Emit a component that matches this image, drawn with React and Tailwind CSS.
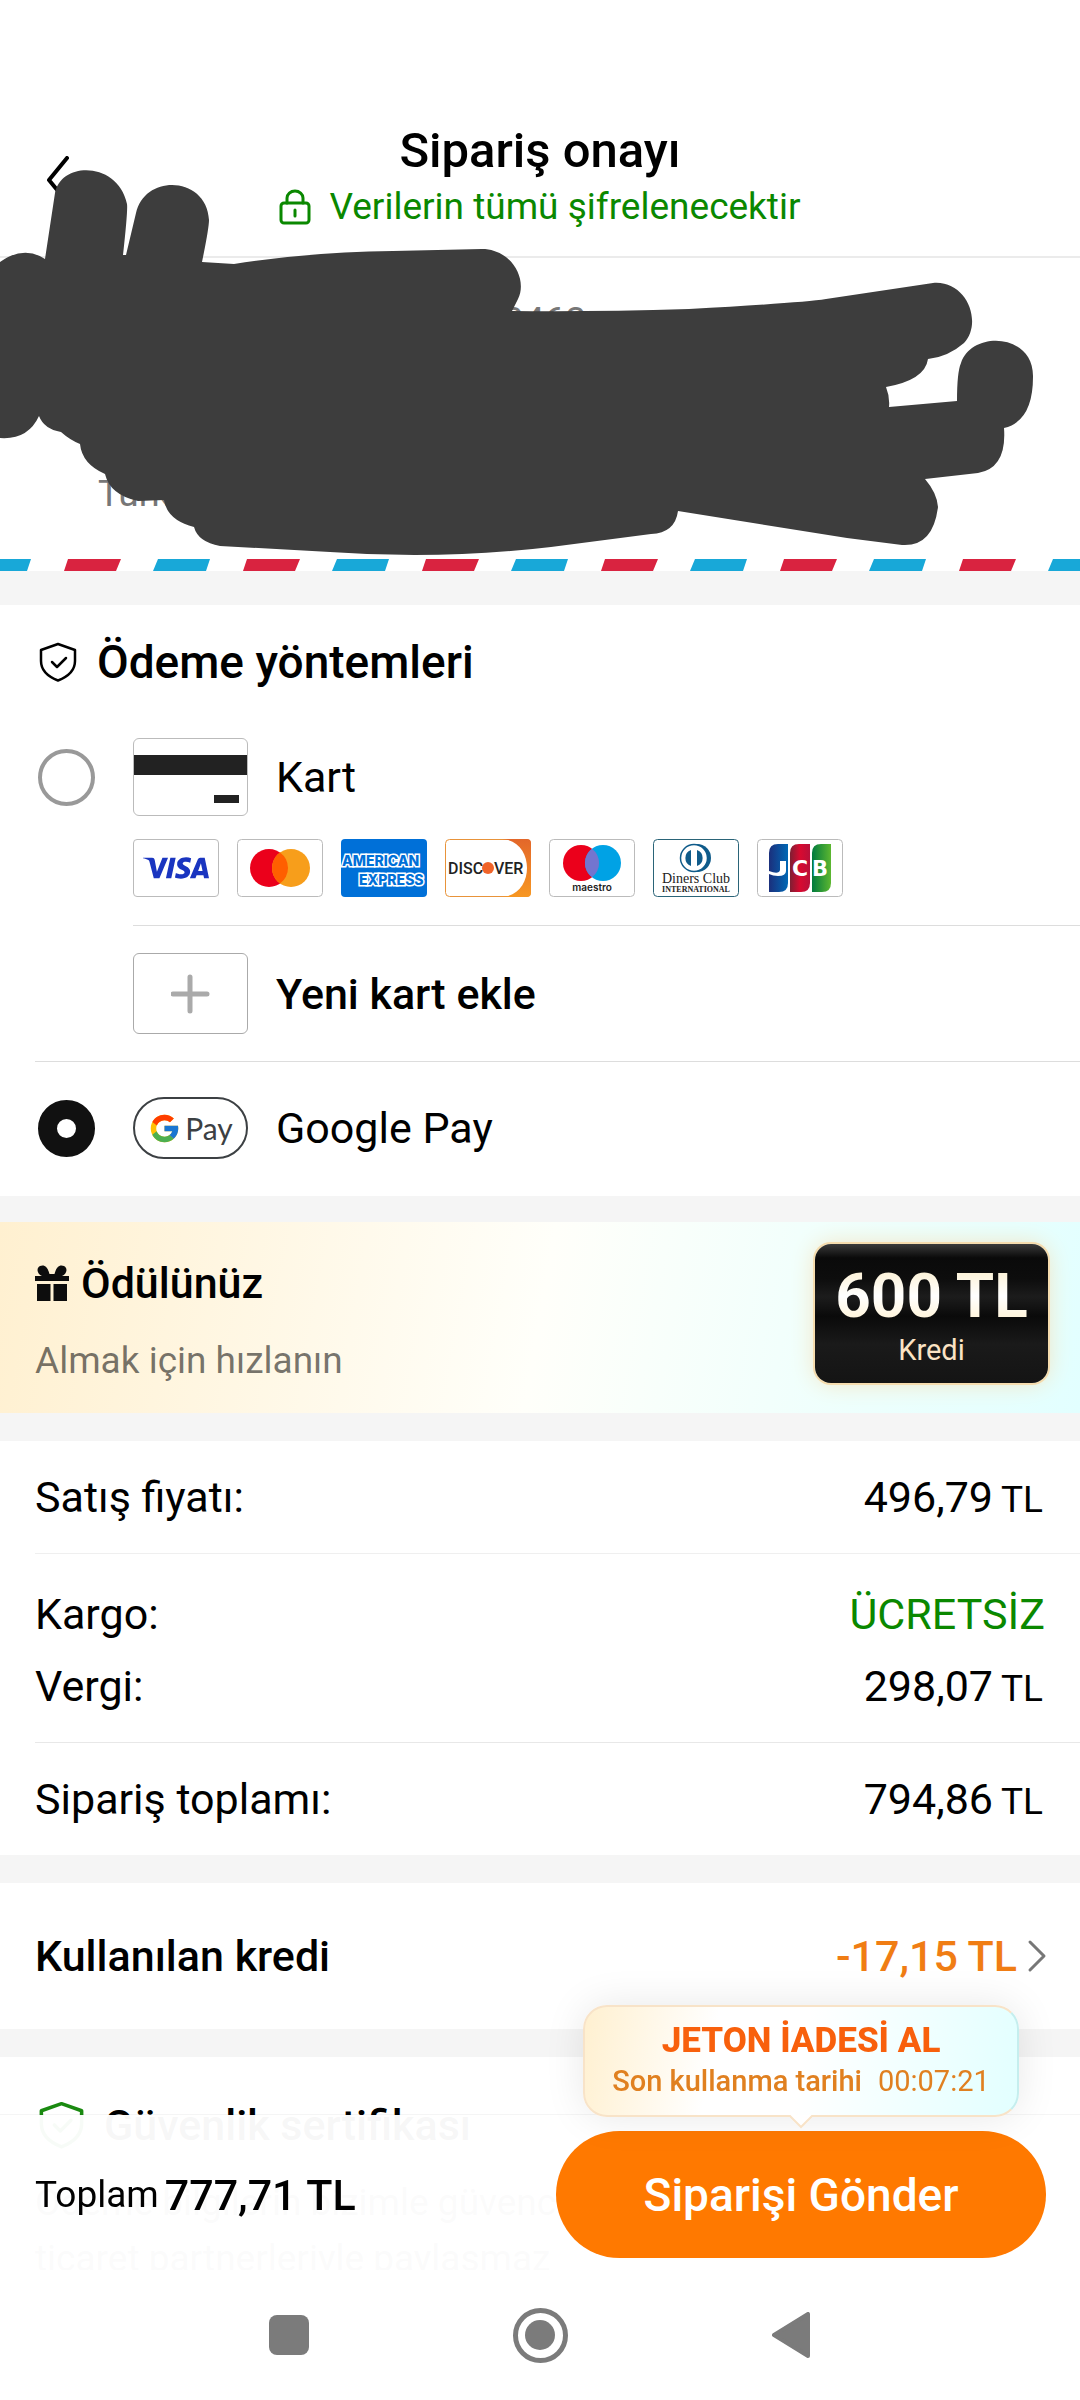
import React, { useState } from 'react';
import { FcGoogle } from 'react-icons/fc';
import { SiVisa } from 'react-icons/si';

const BackIcon = () => (
  <svg className="h-12 w-6" viewBox="0 0 24 48" fill="none" stroke="black" strokeWidth="4" strokeLinecap="round" strokeLinejoin="round">
    <path d="M21 2 L3 24 L21 46" />
  </svg>
);

const LockIcon = () => (
  <svg className="h-9 w-8" viewBox="0 0 32 36" fill="none" stroke="#0a8800" strokeWidth="3" strokeLinecap="round">
    <rect x="2" y="14" width="28" height="20" rx="3" />
    <path d="M8 14 V9 A8 7 0 0 1 24 9 V14" />
    <path d="M16 21 V27" />
  </svg>
);

const ShieldIcon = ({ className }) => (
  <svg className={className} viewBox="0 0 38 40" fill="none" stroke="currentColor" strokeLinecap="round" strokeLinejoin="round">
    <path d="M19 2 L36 8 V19 C36 29 28 35 19 38.500 C10 35 2 29 2 19 V8 Z" />
    <path d="M13 20 L18 25 L27 16" />
  </svg>
);

const GiftIcon = () => (
  <svg className="h-9 w-[34px]" viewBox="0 0 34 36" fill="#0d0d0d">
    <path d="M0 11 H7 C2 9 1 3 5 1 C10 -1 13 3 14.500 9 H19.500 C21 3 24 -1 29 1 C33 3 32 9 27 11 H34 V16 H0 Z" />
    <path d="M2 19 H15.500 V36 H2 Z M18.500 19 H32 V36 H18.500 Z" />
  </svg>
);

// Accepted card brands, each drawn on an 86x58 tile
const Visa = () => (
  <span className="flex h-[58px] w-[86px] items-center justify-center rounded border border-[#bbb] text-[#1a35c0]">
    <SiVisa size={66} title="Visa" />
  </span>
);

const Mastercard = () => (
  <svg className="h-[58px] w-[86px]" viewBox="0 0 86 58">
    <rect x="0.5" y="0.5" width="85" height="57" rx="4" fill="white" stroke="#bbb" />
    <circle cx="32" cy="29" r="19" fill="#eb001b" />
    <circle cx="54" cy="29" r="19" fill="#f79e1b" />
    <path d="M43 13.500 A19 19 0 0 1 43 44.500 A19 19 0 0 1 43 13.500" fill="#ff5f00" />
  </svg>
);

const Amex = () => (
  <svg className="h-[58px] w-[86px]" viewBox="0 0 86 58" fontFamily="Inter, Roboto, sans-serif" fontWeight="800" fill="#0070d8" stroke="white" strokeWidth="3" paintOrder="stroke">
    <rect width="86" height="58" rx="4" stroke="none" />
    <text x="1" y="27" fontSize="14">AMERICAN</text>
    <text x="18" y="46" fontSize="14">EXPRESS</text>
  </svg>
);

const Discover = () => (
  <svg className="h-[58px] w-[86px]" viewBox="0 0 86 58">
    <defs>
      <linearGradient id="discover-orange" x2="0" y2="1">
        <stop stopColor="#e3672a" />
        <stop offset="1" stopColor="#f79722" />
      </linearGradient>
    </defs>
    <rect x="0.5" y="0.5" width="85" height="57" rx="4" fill="white" stroke="#e8933a" />
    <path d="M57 0 H82 Q86 0 86 4 V54 Q86 58 82 58 H57 C74 57 82 43 82 29 C82 15 74 1 57 0 Z" fill="url(#discover-orange)" />
    <text x="3" y="35" fontSize="16" fontWeight="500" fontFamily="Roboto, sans-serif" fill="#222">DISC</text>
    <circle cx="43" cy="29" r="6" fill="#f0642a" />
    <text x="49" y="35" fontSize="16" fontWeight="500" fontFamily="Roboto, sans-serif" fill="#222">VER</text>
  </svg>
);

const Maestro = () => (
  <svg className="h-[58px] w-[86px]" viewBox="0 0 86 58">
    <rect x="0.5" y="0.5" width="85" height="57" rx="4" fill="white" stroke="#bbb" />
    <circle cx="32" cy="24" r="18" fill="#eb001b" />
    <circle cx="54" cy="24" r="18" fill="#00a2e5" />
    <path d="M43 9.700 A18 18 0 0 1 43 38.300 A18 18 0 0 1 43 9.700" fill="#7375cf" />
    <text x="43" y="52" fontSize="10" fontWeight="600" fontFamily="Inter, sans-serif" textAnchor="middle" fill="#222">maestro</text>
  </svg>
);

const Diners = () => (
  <svg className="h-[58px] w-[86px]" viewBox="0 0 86 58">
    <rect x="0.5" y="0.5" width="85" height="57" rx="4" fill="white" stroke="#2a6478" />
    <path d="M41 5 H44 A14 14 0 0 1 44 33 H41 Z" fill="#0f5b8a" />
    <circle cx="41" cy="19" r="13.500" fill="white" stroke="#0f5b8a" strokeWidth="1.500" />
    <path d="M38 11 A8.500 8.500 0 0 0 38 27 Z M44 11 A8.500 8.500 0 0 1 44 27 Z" fill="#0f5b8a" />
    <text x="43" y="44" fontSize="14" fontFamily="Liberation Serif, serif" textAnchor="middle" fill="#222">Diners Club</text>
    <text x="43" y="53" fontSize="8" fontWeight="700" fontFamily="Liberation Serif, serif" textAnchor="middle" fill="#222">INTERNATIONAL</text>
  </svg>
);

const Jcb = () => (
  <svg className="h-[58px] w-[86px]" viewBox="0 0 86 58">
    <defs>
      <linearGradient id="jcb-blue">
        <stop stopColor="#1b2f7c" />
        <stop offset="1" stopColor="#0068b5" />
      </linearGradient>
      <linearGradient id="jcb-red">
        <stop stopColor="#7d1f33" />
        <stop offset="0.5" stopColor="#d80a30" />
        <stop offset="1" stopColor="#b8103a" />
      </linearGradient>
      <linearGradient id="jcb-green">
        <stop stopColor="#007b3e" />
        <stop offset="1" stopColor="#5db730" />
      </linearGradient>
    </defs>
    <rect x="0.5" y="0.5" width="85" height="57" rx="4" fill="white" stroke="#bbb" />
    <path d="M12 14 Q12 5 21 5 H31 V44 Q31 53 22 53 H12 Z" fill="url(#jcb-blue)" />
    <path d="M33 14 Q33 5 42 5 H53 V44 Q53 53 44 53 H33 Z" fill="url(#jcb-red)" />
    <path d="M55 14 Q55 5 64 5 H74 V44 Q74 53 65 53 H55 Z" fill="url(#jcb-green)" />
    <g fill="white">
      <path d="M23 22 H29 V32 Q29 37 21 37 Q16 37 12 35 V32 Q22 36 23 31 Z" />
      <text x="43" y="37" fontSize="22" fontWeight="700" fontFamily="DejaVu Sans, sans-serif" textAnchor="middle">C</text>
      <text x="63" y="37" fontSize="21" fontWeight="700" fontFamily="DejaVu Sans, sans-serif" textAnchor="middle">B</text>
    </g>
  </svg>
);

const Scribble = () => (
  <svg className="pointer-events-none absolute top-0 left-0 w-full" viewBox="0 0 1080 600" fill="#3d3d3d" aria-hidden="true">
    <path d="M0 262 Q24 245 45 259 L55 193 C61 161 118 161 127 204 Q128 210 123 255 L126 255 L136 213 C145 173 207 176 209 220 Q209 228 202 262 L234 264 Q310 252 393 251 L482 249 C511 249 528 279 518 299 L512 311 Q592 312 689 309 Q800 303 826 299 L933 283 C967 280 983 323 964 343 Q948 357 928 359 Q925 380 886 387 Q890 397 889 407 L957 401 Q957 372 961 363 C972 330 1034 333 1033 377 Q1033 421 1004 428 Q1007 468 978 473 L925 479 Q937 493 938 507 Q933 547 902 545 L847 538 L678 511 Q675 533 651 534 L551 547 Q441 560 330 552 L220 546 Q198 542 194 527 Q167 520 164 500 L138 501 Q110 495 105 474 Q82 464 80 444 Q70 440 61 432 Q44 429 39 416 Q28 440 0 438 Z" />
  </svg>
);

const AirmailStripe = () => (
  <svg className="block h-3 w-full" aria-hidden="true">
    <defs>
      <pattern id="airmail" width="179" height="12" patternUnits="userSpaceOnUse" x="-26">
        <path d="M5 0 H57 L53 12 H0 Z" fill="#18a8d8" />
        <path d="M94 0 H147 L142 12 H90 Z" fill="#d92340" />
      </pattern>
    </defs>
    <rect width="100%" height="12" fill="url(#airmail)" />
  </svg>
);

const radioClass =
  'mx-[3px] h-[57px] w-[57px] shrink-0 appearance-none rounded-full border-4 border-[#999] bg-white checked:border-[19px] checked:border-[#111]';

const PriceRow = ({ label, amount }) => (
  <div className="flex items-baseline justify-between">
    <dt>{label}</dt>
    <dd className="flex items-baseline gap-2 pr-[2px]">
      {amount} <span className="text-[37px] leading-10">TL</span>
    </dd>
  </div>
);

const App = () => {
  const [method, setMethod] = useState('gpay');

  return (
    <div className="relative min-h-screen bg-[#f5f5f5] font-[Roboto,sans-serif] text-[43px] leading-14 text-black">
      <header className="relative border-b-2 border-[#ebebeb] bg-white pt-[123px] pb-[21px] text-center">
        <button type="button" aria-label="Geri" className="absolute top-[156px] left-[46px]">
          <BackIcon />
        </button>
        <h1 className="text-[49px] leading-14 font-medium">Sipariş onayı</h1>
        <p className="flex items-center justify-center gap-[18px] text-[37px] leading-14 text-[#0a8800]">
          <LockIcon />
          Verilerin tümü şifrelenecektir
        </p>
      </header>

      <section className="bg-white">
        <address className="flex h-[301px] flex-col justify-between pt-[35px] pb-[37px] pl-[98px] text-[37px] leading-14 text-[#777] not-italic">
          <span className="pl-[405px]">3463</span>
          <span>Türkiye</span>
        </address>
        <AirmailStripe />
      </section>
      <Scribble />

      <section className="mt-[34px] bg-white pt-[29px] pl-[35px]">
        <h2 className="flex items-center text-[46px] font-medium">
          <ShieldIcon className="mr-5 ml-1 h-10 w-[38px] stroke-[2.5]" />
          Ödeme yöntemleri
        </h2>
        <label className="mt-12 flex items-center">
          <input type="radio" name="method" className={radioClass} checked={method === 'card'} onChange={() => setMethod('card')} />
          <span className="mr-7 ml-[35px] flex h-[78px] w-[115px] flex-col rounded-md border border-[#bbb]">
            <span className="mt-4 h-5 bg-[#222]" />
            <span className="mt-5 mr-2 h-2 w-[25px] self-end bg-[#222]" />
          </span>
          Kart
        </label>
        <div className="ml-[98px]">
          <div className="flex gap-[18px] border-b border-[#ddd] pt-[23px] pb-7">
            <Visa />
            <Mastercard />
            <Amex />
            <Discover />
            <Maestro />
            <Diners />
            <Jcb />
          </div>
          <button type="button" className="flex items-center gap-7 py-[27px] font-medium">
            <span className="flex h-[81px] w-[115px] items-center justify-center rounded-md border border-[#aaa]">
              <svg className="h-10 w-10" viewBox="0 0 40 40" stroke="#aaa" strokeWidth="5" strokeLinecap="round">
                <path d="M19 3 V37 M2 20 H36" />
              </svg>
            </span>
            Yeni kart ekle
          </button>
        </div>
        <label className="flex items-center border-t border-[#ddd] pt-[35px] pb-[37px]">
          <input type="radio" name="method" className={radioClass} checked={method === 'gpay'} onChange={() => setMethod('gpay')} />
          <span className="mr-7 ml-[35px] flex h-[62px] w-[115px] items-center justify-center gap-1 rounded-full border-2 border-[#3c4043] font-[Lato,sans-serif] text-[30px] text-[#3c4043]">
            <FcGoogle size={33} />
            Pay
          </span>
          Google Pay
        </label>
      </section>

      <section className="mt-[26px] flex items-start justify-between bg-[linear-gradient(100deg,#fff0d0,#fffffa_50%,#f2fffc_72%,#e2ffff)] pt-[22px] pr-8 pb-6 pl-[35px]">
        <div className="pt-[11px]">
          <h2 className="flex items-center gap-3 font-medium">
            <GiftIcon />
            Ödülünüz
          </h2>
          <p className="mt-[22px] text-[37px] leading-14 text-black/55">Almak için hızlanın</p>
        </div>
        <div className="flex h-[139px] w-[233px] flex-col items-center rounded-2xl bg-[linear-gradient(180deg,#3a3a3a,#0a0a0a_10%,#0d0d0d_25%,#1c1c1c_38%,#0a0a0a_52%,#1a1a1a_72%,#141414)] pt-5 shadow-[0_0_0_2px_#f5dcae,0_0_24px_#f3e3c0]">
          <strong className="bg-linear-to-b from-[#fbeecb] via-white via-50% to-[#fff0cc] bg-clip-text text-[62px] leading-16 font-bold text-transparent">600 TL</strong>
          <span className="text-[29px] leading-11 text-[#fbe3c4]">Kredi</span>
        </div>
      </section>

      <dl className="mt-7 bg-white pl-[35px]">
        <div className="border-b border-[#efefef] py-7 pr-[35px]">
          <PriceRow label="Satış fiyatı:" amount="496,79" />
        </div>
        <div className="flex flex-col gap-4 border-b border-[#e8e8e8] pt-8 pr-[35px] pb-7">
          <div className="flex justify-between">
            <dt>Kargo:</dt>
            <dd className="text-[#0a8800]">ÜCRETSİZ</dd>
          </div>
          <PriceRow label="Vergi:" amount="298,07" />
        </div>
        <div className="pt-7 pr-[35px] pb-7">
          <PriceRow label="Sipariş toplamı:" amount="794,86" />
        </div>
      </dl>

      <section className="mt-7 flex items-center justify-between bg-white py-[45px] pr-[33px] pl-[35px] font-medium">
        <h2>Kullanılan kredi</h2>
        <a href="#kredi" className="flex items-center gap-[10px] text-[#f07d14]">
          -17,15 TL
          <svg className="h-9 w-5" viewBox="0 0 20 36" fill="none" stroke="#777" strokeWidth="3" strokeLinecap="round" strokeLinejoin="round">
            <path d="M3 4 L17 18 L3 32" />
          </svg>
        </a>
      </section>

      <section className="mt-7 bg-white px-[35px] pt-10">
        <h2 className="flex items-center font-medium">
          <ShieldIcon className="mr-5 ml-1 h-12 w-[45px] stroke-[3] text-[#1a8a10]" />
          Güvenlik sertifikası
        </h2>
        <p className="mt-[22px] text-[37px] leading-14 text-[#777]">
          Ödeme bilgilerin bizimle güvence
          <br />
          ticaret partnerleriyle paylaşmaz
        </p>
      </section>

      <footer className="fixed inset-x-0 bottom-0">
        <div className="flex items-center justify-between bg-white/97 pt-4 pr-[34px] pb-3 pl-[35px] shadow-[0_-1px_0_#0000000a]">
          <p className="flex items-center gap-[6px]">
            <span className="text-[37px]">Toplam</span>
            <span className="font-medium">777,71 TL</span>
          </p>
          <div className="relative">
            <div className="absolute bottom-full left-1/2 mb-[14px] w-[436px] -translate-x-1/2 rounded-3xl border-2 border-[#f8e3c8] border-r-[#c5eeee] bg-[linear-gradient(100deg,#fff0d0,white_30%,white_50%,#e2ffff)] py-[14px] text-center whitespace-nowrap shadow-[0_0_40px_#00000018]">
              <p className="text-[35px] leading-10 font-extrabold text-[#f8600c]">JETON İADESİ AL</p>
              <p className="text-[29px] leading-10 text-[#e08020]">
                <span className="mr-4 font-medium">Son kullanma tarihi</span>
                <time>00:07:21</time>
              </p>
              <svg className="absolute top-full left-1/2 h-[14px] w-6 -translate-x-1/2" viewBox="0 0 24 14">
                <path d="M0 0 L12 12 L24 0" fill="white" stroke="#f8e3c8" strokeWidth="2" />
              </svg>
            </div>
            <button type="button" className="h-[127px] w-[490px] rounded-full bg-[#ff7900] text-[46px] font-medium text-white">
              Siparişi Gönder
            </button>
          </div>
        </div>
        <nav className="flex h-[130px] items-center justify-center gap-[204px] bg-white">
          <button type="button" aria-label="Son uygulamalar" className="h-10 w-10 rounded-lg bg-[#7b7b7b]" />
          <button type="button" aria-label="Ana ekran" className="flex h-[55px] w-[55px] items-center justify-center rounded-full border-[5px] border-[#7b7b7b]">
            <span className="h-[30px] w-[30px] rounded-full bg-[#7b7b7b]" />
          </button>
          <button type="button" aria-label="Geri">
            <svg className="h-[46px] w-10" viewBox="0 0 40 46" fill="#7b7b7b" stroke="#7b7b7b" strokeWidth="4" strokeLinejoin="round">
              <path d="M2 23 L36 2 V44 Z" />
            </svg>
          </button>
        </nav>
      </footer>
    </div>
  );
};

export default App;
